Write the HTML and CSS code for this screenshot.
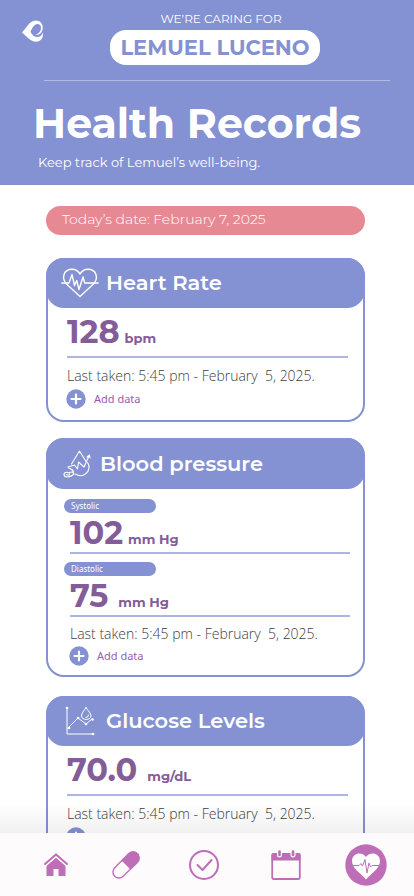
FILE: index.html
```html
<!DOCTYPE html>
<html lang="en">
<head>
<meta charset="utf-8">
<meta name="viewport" content="width=device-width, initial-scale=1">
<title>Health Records</title>
<link rel="stylesheet" href="styles.css">
</head>
<body>
<div class="app">
  <header class="hero">
    <div class="topbar">
      <a class="logo" href="#" aria-label="Home page">
        <svg viewBox="0 0 22 22" width="22" height="22"><path fill="#fff" d="M0 12.500C3.500 9.500 7 .5 13.500 .5C18.500 .5 21 4 20.700 8.500C20.500 12.500 17 15.500 13.500 15C17 13.500 19 11 19 8C19 5.500 17.500 4 15.500 4C12 4 10.500 8 8.500 11.500C9.500 14 12 17 15 17C18 17 20 15.500 20.700 12.500C22 17 19 21.700 14 21.700C8.500 21.700 4.500 16 0 12.500Z"/></svg>
      </a>
      <div class="caring">
        <span class="caring-label">WE’RE CARING FOR</span>
        <span class="caring-name">LEMUEL LUCENO</span>
      </div>
    </div>
    <div class="hero-text">
      <h1>Health Records</h1>
      <p>Keep track of Lemuel’s well-being.</p>
    </div>
  </header>

  <main class="records">
    <p class="today">Today’s date: February 7, 2025</p>

    <section class="card">
      <div class="card-head">
        <svg viewBox="0 0 38 30" width="38" height="30" fill="none" stroke="#fff" stroke-width="1.400" stroke-linejoin="round" stroke-linecap="round"><path d="M19 28.500L5 15.500C.5 10 2.500 1.300 11 1.300Q16 1.300 19 6Q22 1.300 27 1.300C35.500 1.300 37.500 10 33 15.500Z"/><path d="M.8 15H8L11 6.500L13.500 17.500L15.700 12.500L18 21.500L22 9L23.700 15H37.200"/></svg>
        <h2>Heart Rate</h2>
      </div>
      <div class="card-body">
        <p class="value"><strong>128</strong> <span>bpm</span></p>
        <p class="taken">Last taken: 5:45 pm - February&nbsp; 5, 2025.</p>
        <button class="add" type="button"><svg viewBox="0 0 20 20" width="20" height="20"><circle cx="10" cy="10" r="9.700" fill="#8491d2"/><path d="M10 5.500V14.500M5.500 10H14.500" stroke="#fff" stroke-width="2.200" stroke-linecap="round"/></svg>Add data</button>
      </div>
    </section>

    <section class="card card-pressure">
      <div class="card-head">
        <svg class="icon-drop" viewBox="0 0 28 28" width="28" height="28" fill="none" stroke="#fff" stroke-width="1.100" stroke-linejoin="round" stroke-linecap="round"><path d="M8.500 14L16.500 1L23 11.500M26 6L21 17L15.500 12L14.500 19L11.500 15L5 17C4.500 19 9 18 10.500 21.500M12.500 24C19 28.500 26 23 26 17Q26 14.500 24.500 12.500M24 7L26.500 5L27 8M10.500 24.500C6 28 1 27.500 1 24.500C1 21.500 7 21.500 6.500 24.500Q6 26 3.500 24.500M6.500 22.500Q10 21 11 24"/></svg>
        <h2>Blood pressure</h2>
      </div>
      <div class="card-body">
        <h3 class="tag">Systolic</h3>
        <p class="value"><strong>102</strong> <span>mm Hg</span></p>
        <h3 class="tag">Diastolic</h3>
        <p class="value value-wide"><strong>75</strong> <span>mm Hg</span></p>
        <p class="taken">Last taken: 5:45 pm - February&nbsp; 5, 2025.</p>
        <button class="add" type="button"><svg viewBox="0 0 20 20" width="20" height="20"><circle cx="10" cy="10" r="9.700" fill="#8491d2"/><path d="M10 5.500V14.500M5.500 10H14.500" stroke="#fff" stroke-width="2.200" stroke-linecap="round"/></svg>Add data</button>
      </div>
    </section>

    <section class="card">
      <div class="card-head">
        <svg class="icon-chart" viewBox="0 0 30 30" width="30" height="30" fill="none" stroke="#fff" stroke-linejoin="round" stroke-linecap="round"><path d="M2 2V28H28M3 22L13 12L21 18L27 13M21 1.500C19 5 16.500 7 16.500 10C16.500 14.500 26 14.500 26 10C26 7 23 5 21 1.500ZM21 11.500Q23.500 11.500 23.500 9"/><g fill="#fff" stroke="none"><circle cx="2" cy="2" r="1.300"/><circle cx="28" cy="28" r="1.300"/><circle cx="4" cy="22" r="1.300"/><circle cx="13" cy="12" r="1.300"/><circle cx="21" cy="18" r="1.300"/><circle cx="27.500" cy="13.500" r="1.300"/></g></svg>
        <h2>Glucose Levels</h2>
      </div>
      <div class="card-body">
        <p class="value value-wide"><strong>70.0</strong> <span>mg/dL</span></p>
        <p class="taken">Last taken: 5:45 pm - February&nbsp; 5, 2025.</p>
        <button class="add" type="button"><svg viewBox="0 0 20 20" width="20" height="20"><circle cx="10" cy="10" r="9.700" fill="#8491d2"/><path d="M10 5.500V14.500M5.500 10H14.500" stroke="#fff" stroke-width="2.200" stroke-linecap="round"/></svg>Add data</button>
      </div>
    </section>
  </main>

  <nav class="tabs" aria-label="Main">
    <a href="#" aria-label="Home"><svg viewBox="0 0 24 24" width="24" height="24"><path d="M1 11L12 1.500L23 11" fill="none" stroke="#bd6eb7" stroke-width="2" stroke-linecap="round" stroke-linejoin="round"/><path fill="#bd6eb7" d="M2.500 13L12 4.800L21.500 13V23H14.500V16H9.500V23H2.500Z"/></svg></a>
    <a href="#" aria-label="Medication"><svg viewBox="0 0 28 28" width="28" height="28"><g transform="rotate(-45 14 14)"><rect x="-2" y="8" width="32" height="12" rx="6" fill="none" stroke="#bd6eb7" stroke-width="1.400"/><path fill="#bd6eb7" d="M14 7.300H24A6.700 6.700 0 0 1 24 20.700H14Z"/></g></svg></a>
    <a href="#" aria-label="Tasks"><svg viewBox="0 0 30 30" width="30" height="30" fill="none" stroke="#bd6eb7" stroke-width="2" stroke-linecap="round" stroke-linejoin="round"><circle cx="15" cy="15" r="14"/><path d="M8.500 15L13.500 20L22.500 10"/></svg></a>
    <a href="#" aria-label="Calendar"><svg viewBox="0 0 30 30" width="30" height="30"><rect x="1.200" y="4" width="27.600" height="25" rx="1.500" fill="#fdfbfc" stroke="#bd6eb7" stroke-width="1.800"/><path fill="#bd6eb7" d="M.5 10.500V5Q.5 3 2.500 3H27.500Q29.500 3 29.500 5V10.500Z"/><path d="M8.500 2V5M22 2V5" stroke="#fdfbfc" stroke-width="5" stroke-linecap="round"/><path d="M8.500 1.500V5M22 1.500V5" stroke="#bd6eb7" stroke-width="2.600" stroke-linecap="round"/></svg></a>
    <a href="#" aria-label="Health records" aria-current="page"><svg viewBox="0 0 42 42" width="42" height="42"><circle cx="21" cy="21" r="20.700" fill="#bd6eb7"/><path fill="#fff" d="M21 35.500C17 30 7 25 7 17C7 9 17 7 21 13C25 7 35 9 35 17C35 25 25 30 21 35.500Z"/><path d="M8 21.500H14L16 19.500L17.500 22L20 15.500L22 29L24 19L25.500 23L27 21.500H34" fill="none" stroke="#bd6eb7" stroke-linejoin="round"/></svg></a>
  </nav>
</div>
</body>
</html>
```
FILE: styles.css
```css
* { box-sizing: border-box; }

body, h1, h2, h3, p { margin: 0; }

body {
  font-family: Montserrat, Inter, sans-serif;
  background: #fff;
}

.app {
  display: flex;
  flex-direction: column;
  height: 100vh;
}

.hero {
  flex: none;
  padding: 12px 24px 12px 22px;
  background: #8491d2;
  color: #fff;
}

.topbar {
  display: grid;
  grid-template-columns: 22px 1fr;
  padding-bottom: 15px;
}

.logo { margin-top: 8px; }
.logo svg { display: block; }

.caring {
  display: flex;
  flex-direction: column;
  align-items: center;
  gap: 4px;
  padding-right: 4px;
}

.caring-label {
  padding-left: 12px;
  font-size: 12px;
  line-height: 14px;
}

.caring-name {
  padding: 0 10px;
  border-radius: 16px;
  background: #fff;
  color: #8491d2;
  font-size: 21px;
  line-height: 35px;
  font-weight: 700;
}

.hero-text {
  margin-left: 22px;
  border-top: 1px solid #b3bae3;
  padding-top: 18px;
}

h1 {
  margin-left: -11px;
  font-size: 41px;
  line-height: 48px;
  font-weight: 700;
}

.hero-text p {
  margin: 5px 0 1px -6px;
  font-size: 13px;
  line-height: 20px;
}

.records {
  flex: 1;
  min-height: 0;
  overflow-y: auto;
  scrollbar-width: none;
  display: flex;
  flex-direction: column;
  gap: 16px;
  padding: 21px 49px 20px 46px;
}

.today {
  flex: none;
  margin-bottom: 7px;
  padding: 0 16px 2px;
  border-radius: 15px;
  background: #e68993;
  color: #fff;
  font-size: 14px;
  line-height: 27px;
  font-weight: 300;
}

.card {
  flex: none;
  border: 2px solid #8491d2;
  border-radius: 18px;
}

.card-head {
  display: flex;
  align-items: center;
  gap: 7px;
  height: 50px;
  margin: -2px -2px 0;
  padding-left: 15px;
  border-radius: 18px;
  background: #8491d2;
  color: #fff;
}

.icon-drop { margin: 0 2px; }
.icon-chart { margin: 0 4px; }

h2 {
  font-size: 21px;
  line-height: 24px;
  font-weight: 600;
}

.card-body {
  display: flex;
  flex-direction: column;
  padding: 0 15px 11px 19px;
}

.value {
  display: flex;
  align-items: baseline;
  gap: 5px;
  padding: 1px 0;
  border-bottom: 2px solid #adb6e2;
  color: #835c98;
  font-weight: 700;
}

.value strong {
  font-size: 32px;
  line-height: 46px;
  font-weight: 700;
}

.value span { font-size: 13px; }
.value-wide { gap: 10px; }

.taken {
  margin-top: 8px;
  color: #404040;
  font-family: "Open Sans", "Noto Sans", sans-serif;
  font-size: 14px;
  line-height: 20px;
  font-weight: 300;
  white-space: nowrap;
}

.add {
  display: flex;
  align-items: center;
  align-self: flex-start;
  gap: 8px;
  margin: 3px 0 0 -1px;
  padding: 0;
  border: 0;
  background: none;
  color: #9a5eae;
  font-family: "Noto Sans", sans-serif;
  font-size: 11px;
  line-height: 20px;
}

.card-pressure { margin-bottom: 3px; }
.card-pressure .card-head { height: 51px; }
.card-pressure .card-body { padding: 2px 13px 9px 22px; }

.tag {
  width: 92px;
  margin: 8px 0 0 -6px;
  padding-left: 7px;
  border-radius: 7px;
  background: #8491d2;
  color: #fff;
  font-family: "Noto Sans", sans-serif;
  font-size: 8px;
  line-height: 14px;
  font-weight: 400;
}

.card-pressure .value { padding: 0; }
.card-pressure .value strong { line-height: 39px; }
.card-pressure .taken { margin-top: 7px; }
.card-pressure .add { margin-top: 2px; }

.tabs {
  flex: none;
  position: relative;
  display: grid;
  grid-template-columns: 68fr 77fr 82fr 74fr 42px;
  align-items: center;
  height: 63px;
  padding: 0 27px 0 44px;
  background: #fdfbfc;
}

.tabs::before {
  content: "";
  position: absolute;
  left: 0;
  right: 0;
  bottom: 100%;
  height: 30px;
  background: linear-gradient(rgba(0, 0, 0, 0), rgba(0, 0, 0, 0.06));
  pointer-events: none;
}

.tabs a, .tabs svg { display: block; }
```
